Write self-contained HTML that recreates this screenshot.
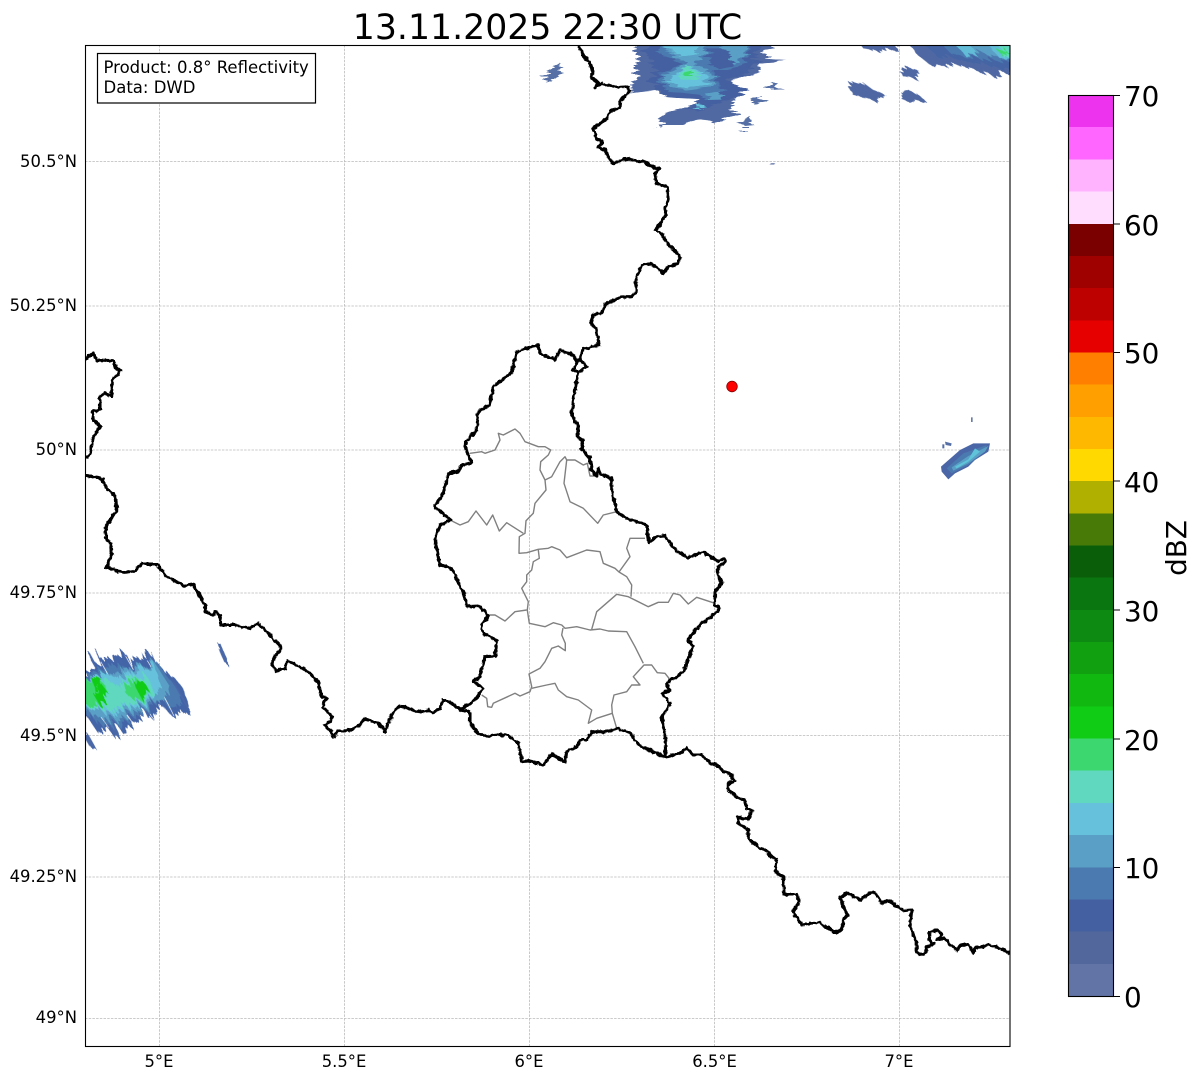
<!DOCTYPE html>
<html><head><meta charset="utf-8"><title>Radar</title>
<style>html,body{margin:0;padding:0;background:#fff}svg{display:block}text{font-family:"DejaVu Sans",sans-serif;fill:#000}</style></head>
<body>
<svg width="1202" height="1081" viewBox="0 0 1202 1081" xmlns="http://www.w3.org/2000/svg">
<defs>
<clipPath id="ax"><rect x="85" y="45" width="925" height="1001.5"/></clipPath>
<filter id="row" x="-10%" y="-10%" width="120%" height="120%" color-interpolation-filters="sRGB">
<feTurbulence type="fractalNoise" baseFrequency="0.03 0.36" numOctaves="2" seed="4" result="n"/>
<feColorMatrix in="n" type="matrix" values="1 0 0 0 0 0 0 0 0 .5 0 0 0 0 0 0 0 0 0 1" result="m"/>
<feDisplacementMap in="SourceGraphic" in2="m" scale="22" xChannelSelector="R" yChannelSelector="G"/>
</filter>
<filter id="wig" x="-2%" y="-2%" width="104%" height="104%" color-interpolation-filters="sRGB">
<feTurbulence type="fractalNoise" baseFrequency="0.22" numOctaves="2" seed="7" result="n"/>
<feColorMatrix in="n" type="matrix" values="1 0 0 0 0 0 1 0 0 0 0 0 0 0 0 0 0 0 0 1" result="m"/>
<feDisplacementMap in="SourceGraphic" in2="m" scale="4" xChannelSelector="R" yChannelSelector="G"/>
</filter>
</defs>
<rect width="1202" height="1081" fill="#fff"/>
<text x="547.5" y="39" font-size="34.7" text-anchor="middle">13.11.2025 22:30 UTC</text>
<g clip-path="url(#ax)">
<g stroke="#bbb" stroke-width=".8" stroke-dasharray="2.5 1.2" fill="none">
<path d="M159.5 45V1046M344.5 45V1046M529.5 45V1046M714.5 45V1046M899.5 45V1046"/>
<path d="M85 161.5H1010M85 306H1010M85 450H1010M85 593H1010M85 735.5H1010M85 877H1010M85 1018.5H1010"/>
</g>
<!-- top radar -->
<g filter="url(#row)">
<g transform="translate(530,40) scale(.33333)">
<polygon fill="#5069a2" points="315,10 720,10 730,25 700,30 715,55 760,60 725,68 695,70 690,95 640,110 595,125 600,135 650,145 635,160 615,185 600,205 620,225 585,235 565,250 510,238 450,255 400,255 385,265 395,240 378,232 420,215 470,205 510,180 490,165 400,170 370,150 300,160 310,125 330,120 312,85 325,70"/>
<polygon fill="#4560a0" points="350,10 690,10 680,70 660,95 590,120 650,150 610,175 540,195 510,215 480,205 510,178 400,170 365,130 380,100 360,60"/>
<polygon fill="#4a7ab0" points="385,10 660,10 660,45 640,70 600,90 550,90 555,130 575,150 570,180 530,180 510,165 420,155 390,130 395,100 450,75 430,55 400,45"/>
<polygon fill="#4560a0" points="535,25 590,25 610,80 560,88 535,60"/>
<polygon fill="#5a9fc5" points="390,14 530,14 520,50 490,65 540,100 540,140 470,152 410,135 400,105 440,85 470,68 430,50"/>
<polygon fill="#5a9fc5" points="590,14 655,14 650,45 610,75 600,55"/>
<polygon fill="#66c2dc" points="400,20 505,20 490,45 450,50"/>
<polygon fill="#66c2dc" points="430,100 480,75 525,105 520,135 470,145 420,125"/>
<polygon fill="#5a9fc5" points="530,160 575,155 570,178 540,180"/>
<polygon fill="#66c2dc" points="500,190 520,195 515,210 500,205"/>
<polygon fill="#60d8c0" points="440,100 478,75 508,105 500,120 450,118"/>
<polygon fill="#3cd86f" points="452,97 480,92 480,108 455,108"/>
<polygon fill="#5670a6" points="40,100 75,75 85,68 90,85 98,90 60,128 48,120"/>
<polygon fill="#5670a6" points="717,130 730,126 737,145 750,148 720,150"/>
<polygon fill="#5670a6" points="668,180 695,168 698,185 668,195"/>
<polygon fill="#5670a6" points="635,240 660,228 662,255 635,258"/>
<rect x="632" y="261" width="28" height="3" fill="#5670a6"/><rect x="632" y="272" width="16" height="4" fill="#5670a6"/><rect x="725" y="369" width="12" height="5" fill="#8090b8"/>
</g>
</g>
<!-- upper-right radar -->
<g transform="rotate(35 930 70)" filter="url(#row)"><g transform="rotate(-35 930 70)">
<g transform="translate(840,40) scale(.33333)">
<g fill="#4f68a4">
<polygon points="25,125 50,130 70,128 100,150 135,165 140,172 115,178 105,185 60,170 40,165 30,145"/>
<polygon points="185,85 205,82 240,95 245,105 235,122 210,110 180,103"/>
<polygon points="185,165 215,155 230,160 255,185 225,180 210,190 190,180"/>
<polygon points="45,0 175,0 170,30 130,35 100,30 70,25"/>
<polygon points="205,0 560,0 560,100 490,100 465,115 440,95 400,88 370,85 345,72 300,78 275,78 240,50"/>
</g>
<polygon fill="#4464a4" points="240,0 560,0 560,85 470,85 420,70 380,65 330,50 290,50"/>
<polygon fill="#4a7ab0" points="300,0 560,0 560,70 470,60 420,55 380,50 330,40"/>
<polygon fill="#5a9fc5" points="330,0 560,0 560,65 470,50 440,45 420,35 380,35"/>
<polygon fill="#62bcd8" points="335,0 385,0 405,45 370,45"/>
<polygon fill="#62bcd8" points="430,0 560,0 560,65 480,55"/>
<polygon fill="#60d8c0" points="462,0 560,0 560,58 488,50"/>
<polygon fill="#3cd86f" points="472,30 496,24 498,38 485,48"/>
</g>
</g></g>
<!-- right small radar -->
<g transform="translate(925,410) scale(.33333)">
<polygon fill="#4a66a6" points="48,170 105,120 145,100 195,100 190,125 150,150 130,170 90,190 70,208 50,185"/>
<polygon fill="#4a7ab0" points="65,175 115,130 185,105 180,125 130,165 80,190"/>
<polygon fill="#5a9fc5" points="80,172 130,138 190,108 180,125 130,160 85,182"/>
<polygon fill="#5fc4da" points="90,170 130,148 150,115 165,125 130,155 95,175"/>
<polygon fill="#5670a6" points="60,95 80,100 78,108 62,105"/>
<rect x="52" y="103" width="6" height="12" fill="#5670a6"/>
<rect x="138" y="22" width="5" height="14" fill="#6b7ca6"/>
</g>
<!-- left radar -->
<g transform="rotate(60 130 690)" filter="url(#row)"><g transform="rotate(-60 130 690)">
<g transform="translate(85,630) scale(.33333)">
<polygon fill="#4464a8" points="-30,150 15,115 50,90 120,65 135,100 190,65 205,95 245,125 270,145 300,185 315,235 265,265 230,225 210,260 190,265 175,235 165,265 115,310 100,290 90,325 70,300 40,310 10,265 -30,240"/>
<polygon fill="#4a7ab0" points="-30,150 30,120 90,105 130,120 210,95 250,140 285,190 290,225 255,235 235,210 195,235 150,255 100,285 60,295 30,270 -30,235"/>
<polygon fill="#5a9fc5" points="-30,160 40,135 100,130 210,100 255,170 240,208 200,220 150,240 100,265 60,275 30,255 -30,230"/>
<polygon fill="#66c2dc" points="-30,165 50,130 110,145 210,105 228,170 200,208 140,228 70,255 35,235 -30,225"/>
<polygon fill="#60d8c0" points="-30,170 60,150 100,170 135,145 190,145 210,195 130,222 70,240 30,230 -30,220"/>
<polygon fill="#3cd86f" points="-30,170 30,145 62,168 75,200 42,226 -30,215"/>
<polygon fill="#3cd86f" points="118,165 160,150 195,190 155,210 125,195"/>
<polygon fill="#10cc14" points="20,148 48,148 52,175 30,182"/>
<polygon fill="#10cc14" points="25,192 55,172 76,200 42,222"/>
<polygon fill="#10cc14" points="148,165 176,152 195,187 166,200"/>
<g stroke="#fff" stroke-width="2" fill="none">
<path d="M50 100L70 135M120 75L140 110M180 80L195 105M50 265L75 300M125 255L150 290M185 235L205 265M240 205L265 255"/>
</g>
<g stroke="#4a68a8" fill="none">
<path d="M15 78L30 105" stroke-width="8"/>
<path d="M37 70L48 98" stroke-width="5"/>
<path d="M195 72L205 100" stroke-width="14"/>
<path d="M262 150L310 235" stroke-width="5"/>
<path d="M85 288L97 318" stroke-width="16"/>
<path d="M0 310L25 355" stroke-width="14"/>
<path d="M400 42L423 93" stroke-width="12"/>
</g>
</g>
</g></g>
<!-- gray provinces -->
<g fill="none" stroke="#808080" stroke-width="1.4" stroke-linejoin="round">
<polyline points="470,453.3 481.7,451.7 485,453.3 495,450 500,440 498.3,433.3 503.3,435 515,429 520,433.3 525,441.7 538.3,446.7 545,446.7 550.7,450 548.3,455 540.7,461.7 540,470 545,480 546,490 535,503.3 533.3,513.3 526,520.7 525,533.3 519.3,536.7 519,553.3 526.7,552.7 538.3,549.3 548.3,548.3 551.7,546.7 560,550 566.7,557.7 586.7,550 600,551.7 603.3,563.3 615,568.3 619,572 626.7,576.7 631.7,585 631,596.7"/>
<polyline points="450,520 460,525 468.3,521.7 476,511 486.7,525 492.7,515 499.3,531 506.7,522.7 523.3,533.3"/>
<polyline points="545,480 551.7,476.7 560,461.7 565,456.7 566.7,460 575,460 583.3,465 587.3,463.3 590,476 596.7,476"/>
<polyline points="566.7,460 564,483.3 570,501.7 583.3,508.3 597.7,523.3 603.3,515 616.7,511.7"/>
<polyline points="645,538.3 630,538.3 626.7,548.3 630,556.7 619,572"/>
<polyline points="538.3,550 539.3,558.3 533.3,561.7 531.7,570 526.7,575 526.7,581.7 521.7,588.3 528.3,601.7 527.3,610 529.3,623.3 545,626.7 553.3,622.7 561.7,625 565,628.3 576.7,626.7 590,630 600,629 608.3,631 626.7,631.7 635,646.7 643.3,663.3"/>
<polyline points="526.7,610 515,611.7 505,621 495,615 488.3,615"/>
<polyline points="563,628 561.7,635 565.3,643.3 565.3,650.7 558.3,646 551.7,648.3 545,661.7 540,668.3 529,674 531.7,686.7 530,691.7 520,696 515,693.3 493.3,703.3 491.7,707.3 487.7,706.7 486.7,698.3 481.7,695"/>
<polyline points="531.7,688.3 546.7,685 555,683.3 558.3,690 566.7,696.7 578.3,700 591.7,710 588.3,723.3 596.7,718.3 612.3,713.3 616.7,728.3"/>
<polyline points="612.3,713.3 611.7,705 614,695 626.7,691.7 631.7,685 640,685 633.3,676.7 644,665 651.7,665 657.3,672.7 665,673.3 669,678.3"/>
<polyline points="591.7,629.3 596.7,611.7 616.7,594.3 628.3,596.7 648.3,606.7 658.3,602.3 668.3,602.3 673.3,593.3 680,595 688.3,604 696.7,597.3 715,603.3"/>
</g>
<!-- black borders -->
<g filter="url(#wig)">
<g fill="none" stroke="#000" stroke-width="3.1" stroke-linejoin="round" stroke-linecap="round">
<polyline points="578.3,44 583.3,55 590,63.3 593.3,73.3 591,77.7 598.3,82.7 595,88.3 601.7,83.3 616.7,87.7 628.3,86.7 629,91.7 620.7,100 620,108.3 611.7,110 605,120 593.3,128.3 596.7,139.3 602.7,141.7 598.3,146.7 605,150 612.3,164 621.7,160 628.3,159 640,161.7 643.3,160.7 655,168.3 659,168.3 655,173.3 656.7,183.3 667.3,187.3 668.7,198.3 665,208.3 665.7,215 656,230 663.3,236.7 666.7,243.3 675,250 680,258.3 678.3,263.3 668.3,266.7 663.3,273.3 650.7,263.3 641.7,265 638.3,273.3 635,281.7 637.3,290 631.7,296.7 623.3,296.7 609.3,301.7 605,305 601.7,313.3 593.3,315 590.7,322.7 596.7,330 599.3,345 590,347.3 583.3,348.3 580,360 586.7,366.7 580,371.7 573.3,370 576.7,361.7 580,360"/>
<polyline points="578,371 576.7,380 574,396.7 571.7,415 578.3,426.7 577.3,438 583.3,440 581,448.3 590,458.3 591.7,470 596.7,476 598.3,468.3 601.7,475 611.7,478 611.7,493.3 615,503.3 616.7,511.7 626.7,518.3 636.7,521.7 646.7,525 649,542.7 656.7,536.7 665,536 676.7,551.7 688.3,557.3 703.3,551.7 718.3,561.7 724.3,558.3 725,561.7 716.7,570 721.7,583.3 715,591.7 715,605 720,608.3 713.3,615 700,625 688.3,639.3 692.7,646.7 685,668.3 678.3,676.7 670,679.3 666.7,685 670,690 661.7,693.3 670,703.3 661.7,718.3 665,733.3 665.7,756.7"/>
<polyline points="576.7,361.7 573.3,355 560,350 555,360 540.7,354 538.3,345 516.7,351.7 511.7,372.3 493.3,386.7 489.3,405 478.3,411.7 476.7,430 466.7,440.7 465,446.7 471.7,462.7 461.7,465 458.3,471.7 448.3,473.3 443.3,493.3 434,506.7 450.7,520 440,525 435,540 438.3,556.7 440,565 451.7,568.3 463.3,591.7 466.7,606.7 478.3,606 488.3,615 481.7,625 483.3,633.3 496.7,640.7 495,656 485,656.7 480,676.7 473.3,681.7 483.3,688.3 475,700 461.7,709.3"/>
<polyline points="385,731.7 393,712 400,706 420,712 428.3,710 433.3,712.3 440,708.3 443.3,700 448.3,701.7 461.7,709.3 459.3,710 470,711.7 470,723.3 478.3,733.3 488.3,736.7 495,734.3 508.3,735 518.3,743.3 521.7,761.7 530,760.7 543.3,765 551.7,754 565,761.7 566.7,751.7 576.7,746.7 580,740 586.7,740 591.7,731.7 606.7,731.7 618.3,728.3 630,733.3 638.3,745 653.3,751.7 665,757.3 673.3,755 680,753.3 686.7,748.3 693.3,755 701.7,755 710,762.7 716.7,765 723.3,771.7 728.3,772.3 735,780.7 728.3,783.3 728.3,790 738.3,798.3 745,800 746.7,808.3 751.7,810.7 748.3,820 738.3,816.7 738.3,823.3 748.3,830 748.3,838.3 758.3,847.3 765,850 771.7,856.7 776.7,859 775,871.7 783.3,876.7 784,894 796.7,894 799.3,901.7 793.3,911.7 801.7,925 818.3,922.7 836.7,932.7 841.7,930 843.3,920 847.3,915 840,898.3 847.3,892.3 860,900 869.3,892.7 875,892.7 881.7,903.3 888.3,900 903.3,910.7 911.7,910 910,926.7 916.7,943.3 916.7,951.7 920,955 925,953.3 926.7,946.7 933.3,944 929.3,940 930,931.7 938.3,930 941.7,935 936.7,940 945,938.3 950,945 957.7,950 960,945.7 968.3,944 973.3,952.7 975,948.3 988.3,945 1003.3,949.3 1008.3,953.3 1014,950"/>
<polyline points="80,363.3 93.3,353.3 96.7,360 113.3,360.7 115.7,367.3 121,370.7 111.7,380.7 111.7,396.7 105,392.7 100,396.7 100,410 92.3,411.7 93.3,420 100,426 93.3,436.7 90,455 80,460"/>
<polyline points="80,474.3 101.7,478.3 106.7,488.3 115.7,496.7 116.7,510 105,528.3 106.7,540 110,541.7 112.3,553.3 105.7,568.3 110,567.7 115,570.7 125,572.3 135,570.7 141.7,564 156.7,564 166.7,576.7 185,586 193.3,584.3 205,605 205,611.7 213.3,615 215,611.7 220,615 220.7,625 235,625 250,628.3 258.3,623.3 281.7,647.3 271.7,661.7 275.7,671.7 285,668.3 287.3,660.7 305,669 318.3,682.3 321.7,696.7 326.7,698.3 322.3,706.7 331.7,716 331,721.7 324.3,725 330,730 333.3,736.7 338.3,731 348.3,730.7 358.3,726.7 364.3,719 378.3,722.7 385,731.7"/>
</g>
</g>
<circle cx="732" cy="386.5" r="5.3" fill="#f00" stroke="#800" stroke-width=".8"/>
<rect x="97.5" y="53.5" width="218" height="49.5" fill="#fff" stroke="#000" stroke-width="1.2"/>
<text x="103.5" y="73" font-size="16.5">Product: 0.8° Reflectivity</text>
<text x="103.5" y="93" font-size="16.5">Data: DWD</text>
</g>
<rect x="85.5" y="45.5" width="924.5" height="1001" fill="none" stroke="#000" stroke-width="1.1"/>
<g font-size="16.4" text-anchor="end">
<text x="77" y="167">50.5°N</text>
<text x="77" y="311">50.25°N</text>
<text x="77" y="455">50°N</text>
<text x="77" y="598">49.75°N</text>
<text x="77" y="741">49.5°N</text>
<text x="77" y="882">49.25°N</text>
<text x="77" y="1023">49°N</text>
</g>
<g font-size="16.4" text-anchor="middle">
<text x="159" y="1067">5°E</text>
<text x="344" y="1067">5.5°E</text>
<text x="529" y="1067">6°E</text>
<text x="714.5" y="1067">6.5°E</text>
<text x="899" y="1067">7°E</text>
</g>
<!-- colorbar -->
<g shape-rendering="crispEdges">
<rect x="1068" y="95.5" width="45" height="33" fill="#ee33ee"/>
<rect x="1068" y="127.2" width="45" height="33" fill="#ff66ff"/>
<rect x="1068" y="159.4" width="45" height="33" fill="#ffb3ff"/>
<rect x="1068" y="191.6" width="45" height="33" fill="#ffddff"/>
<rect x="1068" y="223.8" width="45" height="33" fill="#7a0000"/>
<rect x="1068" y="255.9" width="45" height="33" fill="#9f0000"/>
<rect x="1068" y="288.1" width="45" height="33" fill="#bd0000"/>
<rect x="1068" y="320.3" width="45" height="33" fill="#e60000"/>
<rect x="1068" y="352.5" width="45" height="33" fill="#ff8000"/>
<rect x="1068" y="384.6" width="45" height="33" fill="#ff9f00"/>
<rect x="1068" y="416.8" width="45" height="33" fill="#ffb800"/>
<rect x="1068" y="449" width="45" height="33" fill="#ffd900"/>
<rect x="1068" y="481.2" width="45" height="33" fill="#b0b000"/>
<rect x="1068" y="513.3" width="45" height="33" fill="#487a08"/>
<rect x="1068" y="545.5" width="45" height="33" fill="#0a5e0a"/>
<rect x="1068" y="577.7" width="45" height="33" fill="#0a760f"/>
<rect x="1068" y="609.9" width="45" height="33" fill="#0d8a12"/>
<rect x="1068" y="642" width="45" height="33" fill="#10a010"/>
<rect x="1068" y="674.2" width="45" height="33" fill="#10b810"/>
<rect x="1068" y="706.4" width="45" height="33" fill="#10cc14"/>
<rect x="1068" y="738.6" width="45" height="33" fill="#3cd86f"/>
<rect x="1068" y="770.7" width="45" height="33" fill="#60d8c0"/>
<rect x="1068" y="802.9" width="45" height="33" fill="#66c2dc"/>
<rect x="1068" y="835.1" width="45" height="33" fill="#5a9fc5"/>
<rect x="1068" y="867.3" width="45" height="33" fill="#4a7ab0"/>
<rect x="1068" y="899.4" width="45" height="33" fill="#4560a0"/>
<rect x="1068" y="931.6" width="45" height="33" fill="#52689c"/>
<rect x="1068" y="963.8" width="45" height="32.7" fill="#6274a6"/>
</g>
<rect x="1068.5" y="95.5" width="45" height="901" fill="none" stroke="#000" stroke-width="1.1"/>
<path d="M1113 95.5h7M1113 224h7M1113 352.5h7M1113 481h7M1113 610h7M1113 739h7M1113 867.5h7M1113 996.5h7" stroke="#000" stroke-width="1.1"/>
<g font-size="27.8">
<text x="1124" y="106">70</text>
<text x="1124" y="235">60</text>
<text x="1124" y="363">50</text>
<text x="1124" y="492">40</text>
<text x="1124" y="621">30</text>
<text x="1124" y="750">20</text>
<text x="1124" y="878">10</text>
<text x="1124" y="1007">0</text>
</g>
<text transform="translate(1186,548) rotate(-90)" font-size="27.8" text-anchor="middle">dBZ</text>
</svg>
</body></html>
